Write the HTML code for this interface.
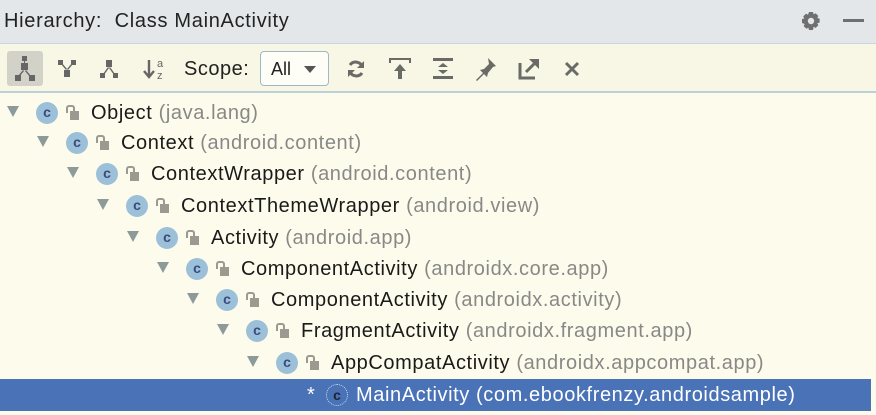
<!DOCTYPE html>
<html><head><meta charset="utf-8"><style>
*{margin:0;padding:0;box-sizing:border-box}
body{width:876px;height:415px;overflow:hidden;background:#fdfcec;font-family:"Liberation Sans",sans-serif;position:relative}
.hdr{position:absolute;left:0;top:0;width:876px;height:44px;background:#e4e7ea;border-bottom:1px solid #c9d6dd}
.hdr .t{position:absolute;left:4px;top:10px;font-size:20px;color:#222;letter-spacing:.7px}
.tb{position:absolute;left:0;top:44px;width:876px;height:49px;background:#f8f6e4;border-bottom:2px solid #bcd0d8}
.ic{position:absolute}
.row{position:absolute;height:31px;font-size:20px;letter-spacing:.6px;white-space:nowrap;color:#1a1a1a}
.row .g{color:#888}
.tri{position:absolute;width:0;height:0;border-left:6px solid transparent;border-right:6px solid transparent;border-top:11px solid #8d9a9a}
.c{position:absolute;width:22px;height:22px;border-radius:50%;background:#9cc0d8;color:#3a4a80;font-size:14px;font-weight:bold;text-align:center;line-height:21px}
.lk{position:absolute;width:9px;height:9px;background:#9a9a90}
.lk:before{content:"";position:absolute;left:-4px;top:-6px;width:5px;height:6px;border:2px solid #9a9a90;border-bottom:none;border-radius:3px 3px 0 0}
.sel{position:absolute;left:0;top:379px;width:871px;height:32px;background:#4a72b6}
</style></head><body>
<div class="hdr"><div class="t">Hierarchy:&nbsp; Class MainActivity</div>
<svg class="ic" style="left:801px;top:11px" width="20" height="20" viewBox="0 0 20 20"><path fill="#6f6f6f" d="M8 1h4l.6 2.4 2-1.2 2.8 2.8-1.2 2 2.4.6v4l-2.4.6 1.2 2-2.8 2.8-2-1.2L12 19H8l-.6-2.4-2 1.2-2.8-2.8 1.2-2L1 12V8l2.4-.6-1.2-2 2.8-2.8 2 1.2z"/><circle cx="10" cy="10" r="3.2" fill="#e4e7ea"/></svg>
<div class="ic" style="left:843px;top:19px;width:21px;height:3px;background:#6f6f6f"></div>
</div>
<div class="tb">
<div class="ic" style="left:7px;top:7px;width:36px;height:35px;background:#d2d2c8;border-radius:3px"></div>
<svg class="ic" style="left:13px;top:12px" width="24" height="26" viewBox="0 0 24 26"><g fill="#666"><rect x="9" y="0" width="5" height="5"/><rect x="8" y="7" width="7" height="7"/><rect x="2" y="19" width="6" height="6"/><rect x="16" y="19" width="6" height="6"/><path d="M11 5h1v3h-1zM10 14l-5 6 1 1 5-6zM13 14l5 6-1 1-5-6z"/></g></svg>
<svg class="ic" style="left:56px;top:14px" width="22" height="22" viewBox="0 0 22 22"><g fill="#666"><rect x="2" y="2" width="5" height="5"/><rect x="15" y="2" width="5" height="5"/><rect x="8" y="12" width="6" height="7"/><path d="M5 6l5 6 1-1-5-6zM17 6l-5 6-1-1 5-6z"/></g></svg>
<svg class="ic" style="left:98px;top:14px" width="22" height="22" viewBox="0 0 22 22"><g fill="#666"><rect x="8" y="2" width="6" height="7"/><rect x="2" y="15" width="5" height="5"/><rect x="15" y="15" width="5" height="5"/><path d="M10 9l-5 7 1 1 5-7zM12 9l5 7-1 1-5-7z"/></g></svg>
<svg class="ic" style="left:142px;top:12px" width="26" height="26" viewBox="0 0 26 26"><path d="M7 4v16M2 15l5 6 5-6" stroke="#666" stroke-width="2.4" fill="none"/><text x="15" y="11" font-size="11" fill="#666" font-family="Liberation Sans">a</text><text x="15" y="23" font-size="11" fill="#666" font-family="Liberation Sans">z</text></svg>
<div class="ic" style="left:184px;top:14px;font-size:20px;letter-spacing:.5px;color:#222">Scope:</div>
<div class="ic" style="left:260px;top:7px;width:69px;height:35px;background:#fffef6;border:1px solid #9fb8c8;border-radius:4px"><span style="position:absolute;left:10px;top:7px;font-size:18px;color:#222">All</span><div style="position:absolute;left:43px;top:14px;border-left:6px solid transparent;border-right:6px solid transparent;border-top:7px solid #555"></div></div>
<svg class="ic" style="left:345px;top:14px" width="22" height="22" viewBox="0 0 22 22"><path d="M17 8a7 7 0 0 0-12-1M5 14a7 7 0 0 0 12 1" stroke="#6a6a66" stroke-width="3" fill="none"/><path d="M19 3v7h-7zM3 19v-7h7z" fill="#6a6a66"/></svg>
<svg class="ic" style="left:388px;top:12px" width="24" height="24" viewBox="0 0 24 24"><path d="M2 7V3h20v4" stroke="#6a6a66" stroke-width="2" fill="none"/><path d="M12 8l-6 7h4v8h4v-8h4z" fill="#6a6a66"/></svg>
<svg class="ic" style="left:431px;top:12px" width="24" height="26" viewBox="0 0 24 26"><rect x="2" y="2" width="20" height="3" fill="#6a6a66"/><rect x="2" y="20" width="20" height="3" fill="#6a6a66"/><path d="M7 11l5-4 5 4zM7 14l5 4 5-4z" fill="#6a6a66"/></svg>
<svg class="ic" style="left:474px;top:12px" width="24" height="26" viewBox="0 0 24 26"><path d="M14 2l8 8-3 1-5 6-1 4-3-3-7 7-1-1 7-7-3-3 4-1 5-5z" fill="#6a6a66"/></svg>
<svg class="ic" style="left:517px;top:13px" width="24" height="24" viewBox="0 0 24 24"><path d="M3 6v15h15" stroke="#6a6a66" stroke-width="3" fill="none"/><path d="M9 15L19 5" stroke="#6a6a66" stroke-width="3"/><path d="M12 2h10v10z" fill="#6a6a66"/></svg>
<svg class="ic" style="left:563px;top:16px" width="18" height="18" viewBox="0 0 18 18"><path d="M3 3l12 12M15 3L3 15" stroke="#6a6a66" stroke-width="3"/></svg>
</div>
<div class="sel"></div>
<div id="tree"></div>
<script>
var rows=[["Object","java.lang"],["Context","android.content"],["ContextWrapper","android.content"],["ContextThemeWrapper","android.view"],["Activity","android.app"],["ComponentActivity","androidx.core.app"],["ComponentActivity","androidx.activity"],["FragmentActivity","androidx.fragment.app"],["AppCompatActivity","androidx.appcompat.app"]];
var tops=[113,143,174,206,238,269,300,331,363];var h="";
rows.forEach(function(r,i){var x=i*30,y=tops[i];
h+='<div class="tri" style="left:'+(7+x)+'px;top:'+(y-7)+'px"></div>';
h+='<div class="c" style="left:'+(36+x)+'px;top:'+(y-11)+'px">c</div>';
h+='<div class="lk" style="left:'+(70+x)+'px;top:'+(y-2)+'px"></div>';
h+='<div class="row" style="left:'+(91+x)+'px;top:'+(y-11)+'px">'+r[0]+' <span class="g">('+r[1]+')</span></div>';});
h+='<div class="row" style="left:307px;top:384px;color:#fff">*</div>';
h+='<div class="c" style="left:326px;top:384px;background:transparent;border:1px dotted #cde;color:#223">c</div>';
h+='<div class="row" style="left:356px;top:384px;color:#fff">MainActivity (com.ebookfrenzy.androidsample)</div>';
document.getElementById("tree").innerHTML=h;
</script>
</body></html>
